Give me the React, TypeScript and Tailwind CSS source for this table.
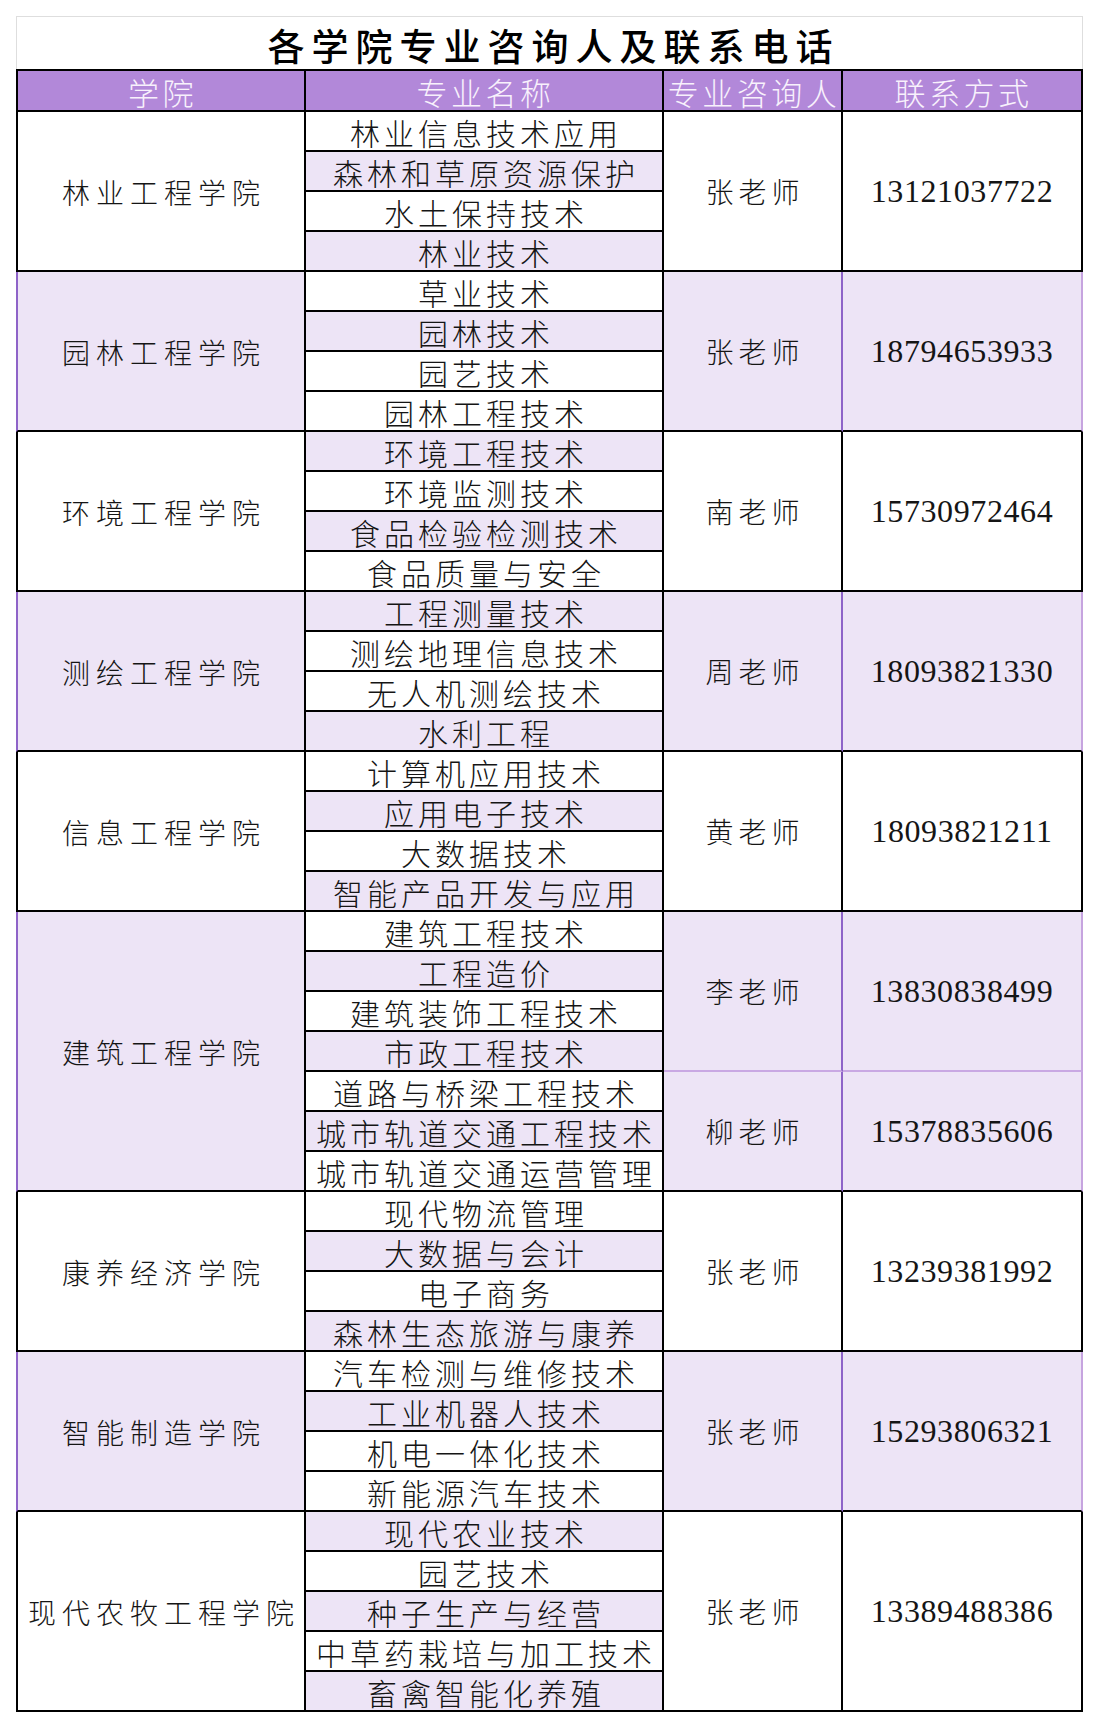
const groups = [
  {
    name: "林业工程学院",
    tint: false,
    majors: [
      ["林业信息技术应用", 0],
      ["森林和草原资源保护", 1],
      ["水土保持技术", 0],
      ["林业技术", 1],
    ],
    contacts: [{ who: "张老师", tel: "13121037722", at: 0, span: 4 }],
  },
  {
    name: "园林工程学院",
    tint: true,
    majors: [
      ["草业技术", 0],
      ["园林技术", 1],
      ["园艺技术", 0],
      ["园林工程技术", 0],
    ],
    contacts: [{ who: "张老师", tel: "18794653933", at: 0, span: 4 }],
  },
  {
    name: "环境工程学院",
    tint: false,
    majors: [
      ["环境工程技术", 1],
      ["环境监测技术", 0],
      ["食品检验检测技术", 1],
      ["食品质量与安全", 0],
    ],
    contacts: [{ who: "南老师", tel: "15730972464", at: 0, span: 4 }],
  },
  {
    name: "测绘工程学院",
    tint: true,
    majors: [
      ["工程测量技术", 1],
      ["测绘地理信息技术", 0],
      ["无人机测绘技术", 0],
      ["水利工程", 1],
    ],
    contacts: [{ who: "周老师", tel: "18093821330", at: 0, span: 4 }],
  },
  {
    name: "信息工程学院",
    tint: false,
    majors: [
      ["计算机应用技术", 0],
      ["应用电子技术", 1],
      ["大数据技术", 0],
      ["智能产品开发与应用", 1],
    ],
    contacts: [{ who: "黄老师", tel: "18093821211", at: 0, span: 4 }],
  },
  {
    name: "建筑工程学院",
    tint: true,
    majors: [
      ["建筑工程技术", 0],
      ["工程造价", 1],
      ["建筑装饰工程技术", 0],
      ["市政工程技术", 1],
      ["道路与桥梁工程技术", 0],
      ["城市轨道交通工程技术", 1],
      ["城市轨道交通运营管理", 0],
    ],
    contacts: [
      { who: "李老师", tel: "13830838499", at: 0, span: 4 },
      { who: "柳老师", tel: "15378835606", at: 4, span: 3 },
    ],
  },
  {
    name: "康养经济学院",
    tint: false,
    majors: [
      ["现代物流管理", 0],
      ["大数据与会计", 1],
      ["电子商务", 0],
      ["森林生态旅游与康养", 1],
    ],
    contacts: [{ who: "张老师", tel: "13239381992", at: 0, span: 4 }],
  },
  {
    name: "智能制造学院",
    tint: true,
    majors: [
      ["汽车检测与维修技术", 0],
      ["工业机器人技术", 1],
      ["机电一体化技术", 0],
      ["新能源汽车技术", 0],
    ],
    contacts: [{ who: "张老师", tel: "15293806321", at: 0, span: 4 }],
  },
  {
    name: "现代农牧工程学院",
    tint: false,
    majors: [
      ["现代农业技术", 1],
      ["园艺技术", 0],
      ["种子生产与经营", 1],
      ["中草药栽培与加工技术", 0],
      ["畜禽智能化养殖", 1],
    ],
    contacts: [{ who: "张老师", tel: "13389488386", at: 0, span: 5 }],
  },
];

const spans: Record<number, string> = {
  3: "row-span-3",
  4: "row-span-4",
  5: "row-span-5",
  7: "row-span-7",
};

const cjk = "font-['Noto_Sans_CJK_SC',sans-serif]";

const App = () => {
  const cells: React.ReactNode[] = [];

  groups.forEach((g, gi) => {
    cells.push(
      <div
        key={`c1-${gi}`}
        className={`col-start-1 ${spans[g.majors.length]} flex items-center justify-center border-l-2 border-r-2 border-b-2 border-black pl-[6px] pt-[1px] text-[28px] font-light leading-none tracking-[6px] text-[#151515] ${
          g.tint ? "bg-[#ede4f6] border-l-[#8e63c8]" : "bg-white"
        }`}
      >
        {g.name}
      </div>
    );

    g.majors.forEach(([m, lav], mi) => {
      cells.push(
        <div
          key={`c2-${gi}-${mi}`}
          className={`col-start-2 flex items-center justify-center whitespace-nowrap border-r-2 border-b-2 border-black pl-[4px] pt-[2px] text-[30px] font-light leading-none tracking-[4px] text-[#151515] ${
            lav ? "bg-[#ede4f6]" : "bg-white"
          }`}
        >
          {m}
        </div>
      );

      g.contacts
        .filter((c) => c.at === mi)
        .forEach((c, ci) => {
          const last = c.at + c.span === g.majors.length;
          const bottom = last ? "border-b-black" : "border-b-[#c9a8e3]";
          cells.push(
            <div
              key={`c3-${gi}-${ci}-${mi}`}
              className={`col-start-3 ${spans[c.span]} flex items-center justify-center border-r-2 border-b-2 pl-[5px] text-[28px] font-light leading-none tracking-[5px] text-[#151515] ${bottom} ${
                g.tint
                  ? "bg-[#ede4f6] border-r-[#8e63c8]"
                  : "bg-white border-r-black"
              }`}
            >
              {c.who}
            </div>
          );
          cells.push(
            <div
              key={`c4-${gi}-${ci}-${mi}`}
              className={`col-start-4 ${spans[c.span]} flex items-center justify-center border-r-2 border-b-2 font-['Liberation_Serif',serif] text-[32px] leading-none tracking-[0.6px] text-[#151515] ${bottom} ${
                g.tint
                  ? "bg-[#ede4f6] border-r-[#c6a4df]"
                  : "bg-white border-r-black"
              }`}
            >
              {c.tel}
            </div>
          );
        });
    });
  });

  return (
    <div className={`min-h-screen w-full bg-white pt-4 ${cjk}`}>
      <div className="ml-4 w-[1067px]">
        <div className="flex h-[53px] items-end justify-center border border-b-0 border-[#dedede] pb-[5px] pl-[8px] text-[37px] font-medium leading-none tracking-[7px] text-black">
          各学院专业咨询人及联系电话
        </div>

        <div className="grid grid-cols-[290px_358px_179px_240px] grid-rows-[41px] auto-rows-[40px] border-t-2 border-black">
          {["学院", "专业名称", "专业咨询人", "联系方式"].map((h, i) => (
            <div
              key={h}
              className={`flex items-center justify-center whitespace-nowrap border-r-2 border-b-2 border-black bg-[#b288d9] pl-[3px] pt-[1px] text-[31px] font-light leading-none tracking-[3.5px] text-[#f8f1fc] ${
                i === 0 ? "border-l-2" : ""
              }`}
            >
              {h}
            </div>
          ))}
          {cells}
        </div>
      </div>
    </div>
  );
};

export default App;
